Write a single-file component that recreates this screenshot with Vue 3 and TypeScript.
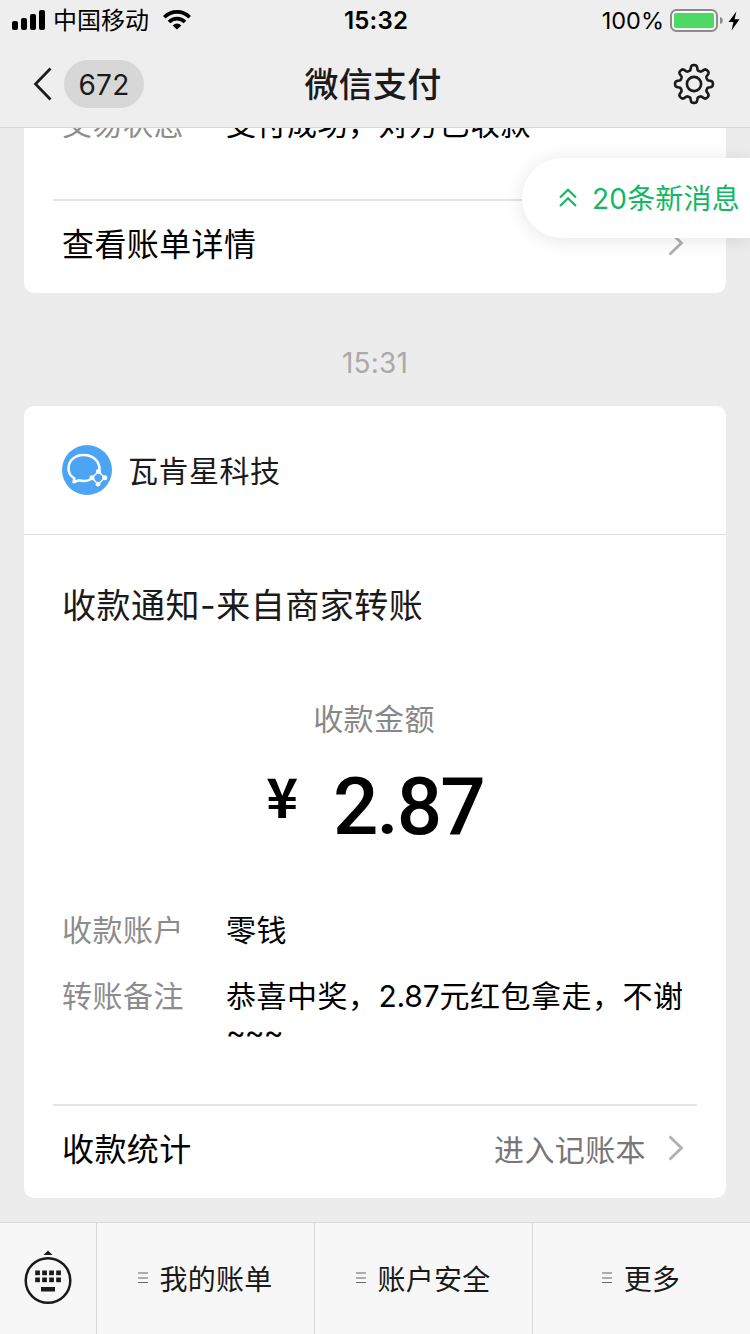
<script setup lang="ts">
interface MenuEntry {
  label: string
}

const menu: MenuEntry[] = [{ label: '我的账单' }, { label: '账户安全' }, { label: '更多' }]

interface Detail {
  label: string
  value: string
}

const details: Detail[] = [
  { label: '收款账户', value: '零钱' },
  { label: '转账备注', value: '恭喜中奖，2.87元红包拿走，不谢~~~' },
]

// Separates figures and tildes from Chinese text so they can be set tighter
const segments = (text: string): string[] => text.match(/[\d.]+|~+|[^\d.~]+/g) ?? []
const isLatin = (text: string): boolean => /^[\d.]/.test(text)
const isTilde = (text: string): boolean => text.startsWith('~')

const keys = [0, 1, 2, 3].flatMap((c) => [0, 1].map((r) => ({ x: 11.2 + c * 7, y: 20.5 + r * 7 })))

// Outline of an eight-toothed gear centred on 22,22
const gearPath = (() => {
  const steps = 192
  const points: string[] = []
  for (let i = 0; i < steps; i++) {
    const a = (i / steps) * Math.PI * 2
    const r = 16.4 + 2.5 * (Math.tanh(2.1 * Math.cos(8 * a)) / Math.tanh(2.1))
    points.push(`${(22 + r * Math.sin(a)).toFixed(2)} ${(22 - r * Math.cos(a)).toFixed(2)}`)
  }
  return `M${points.join('L')}Z`
})()
</script>

<template>
  <div class="screen">
    <header class="top">
      <div class="status">
        <div class="status-left">
          <svg class="signal" width="34" height="22" viewBox="0 0 34 22">
            <rect x="0" y="12" width="6" height="9" rx="2" />
            <rect x="9" y="9" width="6" height="12" rx="2" />
            <rect x="18" y="5" width="6" height="16" rx="2" />
            <rect x="27" y="1" width="6" height="20" rx="2" />
          </svg>
          <span class="carrier">中国移动</span>
          <svg class="wifi" width="28" height="20" viewBox="0 0 28 20">
            <g fill="none" stroke="#000" stroke-width="3.7">
              <path d="M1.3 7.3C8.4 .1 19.6 .1 26.7 7.3" />
              <path d="M6 12C10.5 7.6 17.5 7.6 22 12" />
            </g>
            <path d="M9.6 15.4Q14 11.6 18.4 15.4L14 19.6Z" />
          </svg>
        </div>
        <span class="clock">15:32</span>
        <div class="status-right">
          <span class="percent">100%</span>
          <svg width="54" height="24" viewBox="0 0 54 24">
            <rect x="1" y="1" width="46" height="21" rx="5.5" fill="#f8f8f8" stroke="#8c8c8c" stroke-width="2" />
            <rect x="4" y="4" width="40" height="15" rx="2" fill="#4cd964" />
            <path d="M50 8C53.8 8.6 53.8 14.4 50 15Z" fill="#8c8c8c" />
          </svg>
          <svg class="bolt" width="12" height="20" viewBox="0 0 12 20">
            <path d="M8.4 .5L.5 11H5.4L3.6 19.5L11.5 8.3H6.6Z" />
          </svg>
        </div>
      </div>
      <nav class="nav">
        <div class="back">
          <svg width="20" height="36" viewBox="0 0 20 36">
            <path d="M17.5 2.5L2.5 18L17.5 33.5" fill="none" stroke="#1a1a1a" stroke-width="2.7" />
          </svg>
          <span class="count">672</span>
        </div>
        <h1>微信支付</h1>
        <svg class="gear" width="44" height="44" viewBox="0 0 44 44" fill="none" stroke="#1a1a1a" stroke-width="2.6">
          <path :d="gearPath" stroke-linejoin="round" />
          <circle cx="22" cy="22" r="7.1" />
        </svg>
      </nav>
    </header>

    <main class="feed">
      <section class="card previous">
        <div class="row cut">
          <span class="label">交易状态</span>
          <span class="value">支付成功，对方已收款</span>
        </div>
        <div class="action">
          <span>查看账单详情</span>
          <svg class="chevron" width="18" height="28" viewBox="0 0 18 28">
            <path d="M2.500 2.500L14.500 14L2.500 25.500" />
          </svg>
        </div>
      </section>

      <time>15:31</time>

      <section class="card">
        <div class="merchant">
          <svg width="50" height="50" viewBox="0 0 50 50">
            <circle cx="25" cy="25" r="25" fill="#4ca4f4" />
            <path
              d="M37.5 25C37.8 16 31 10 21.5 10C12.500 10 6.500 16 6.500 23.500C6.500 28 9 31.500 12.500 33.500L11.500 37.200L17 35.300C21 36.500 25 36.200 28.500 34.500"
              fill="none" stroke="#fff" stroke-width="2.5" stroke-linejoin="round" />
            <path d="M36.500 26.500L42.800 32.800L36 39.500L30 32.800Z" fill="#4ca4f4" stroke="#fff" stroke-width="1.500" />
            <g fill="#fff">
              <circle cx="36.500" cy="26.500" r="2.500" />
              <circle cx="42.800" cy="32.800" r="2.500" />
              <circle cx="36" cy="39.200" r="2.400" />
              <circle cx="30" cy="32.800" r="2.500" />
            </g>
          </svg>
          <span>瓦肯星科技</span>
        </div>
        <h2>收款通知-来自商家转账</h2>
        <div class="amount-label">收款金额</div>
        <div class="amount"><span class="yen">¥</span><span class="sum">2.87</span></div>
        <div class="details">
          <div v-for="item in details" :key="item.label" class="row">
            <span class="label">{{ item.label }}</span>
            <span class="value"><span v-for="(part, i) in segments(item.value)" :key="i" :class="{ latin: isLatin(part), tilde: isTilde(part) }">{{ part }}</span></span>
          </div>
        </div>
        <div class="action">
          <span>收款统计</span>
          <span class="hint">进入记账本</span>
          <svg class="chevron" width="18" height="28" viewBox="0 0 18 28">
            <path d="M2.500 2.500L14.500 14L2.500 25.500" />
          </svg>
        </div>
      </section>

      <div class="unread">
        <svg width="18" height="20" viewBox="0 0 18 20" fill="none" stroke="#12b765" stroke-width="2.1">
          <path d="M1 9.500L9 1.800L17 9.500M1 18L9 10.300L17 18" />
        </svg>
        <span>20条新消息</span>
      </div>
    </main>

    <footer class="menu">
      <div class="keyboard">
        <svg width="48" height="56" viewBox="0 0 48 56">
          <path d="M19.500 5L24 .5L28.500 5Z" fill="#1a1a1a" />
          <circle cx="24" cy="30.500" r="22.300" fill="none" stroke="#1a1a1a" stroke-width="2.500" />
          <rect v-for="k in keys" :key="`${k.x}-${k.y}`" :x="k.x" :y="k.y" width="4.700" height="4.700" fill="#1a1a1a" />
          <rect x="17" y="37" width="14" height="4.500" fill="#1a1a1a" />
        </svg>
      </div>
      <div v-for="entry in menu" :key="entry.label" class="entry">
        <svg width="10" height="12" viewBox="0 0 10 12" stroke="#666" stroke-width="1.200">
          <path d="M0 1H10M0 6H10M0 10.500H10" />
        </svg>
        <span>{{ entry.label }}</span>
      </div>
    </footer>
  </div>
</template>

<style>
body {
  background: #ececec;
}
</style>

<style scoped>
.screen {
  display: flex;
  flex-direction: column;
  width: 750px;
  height: 1334px;
  overflow: hidden;
  background: #ececec;
  color: #000;
  font-family: Inter, 'Noto Sans CJK SC', sans-serif;
}
svg {
  display: block;
  flex: none;
}
.top {
  box-sizing: border-box;
  height: 128px;
  flex: none;
  background: #eee;
  border-bottom: 1px solid #d5d5d5;
}
.status {
  display: grid;
  grid-template-columns: 1fr auto 1fr;
  align-items: center;
  height: 40px;
  padding: 0 10px 0 12px;
  line-height: 38px;
}
.status-left,
.status-right {
  display: flex;
  align-items: center;
}
.status span {
  padding-top: 2px;
}
.status-right {
  justify-content: flex-end;
}
.status-right svg {
  margin-top: 1px;
}
.carrier {
  margin-left: 7px;
  font-size: 24px;
}
.wifi {
  margin-left: 14px;
}
.clock {
  font-size: 24px;
  font-weight: 600;
  letter-spacing: 0.2px;
}
.percent {
  margin-right: 6px;
  font-size: 23.5px;
}
.bolt {
  margin-left: 4px;
}
.nav {
  display: grid;
  grid-template-columns: 1fr auto 1fr;
  align-items: center;
  height: 88px;
  padding: 0 34px 0 33px;
}
.back {
  display: flex;
  align-items: center;
  gap: 11px;
}
.count {
  width: 80px;
  height: 48px;
  border-radius: 24px;
  background: #d7d7d7;
  color: #1a1a1a;
  font-size: 28px;
  line-height: 50px;
  letter-spacing: 0.3px;
  text-align: center;
}
h1 {
  margin: 0;
  padding: 2px 3px 0 0;
  color: #1a1a1a;
  font-size: 34px;
  font-weight: 500;
  letter-spacing: 0.2px;
  line-height: 48px;
}
.gear {
  justify-self: end;
}
.feed {
  position: relative;
  flex: 1;
  overflow: hidden;
  padding: 0 24px;
}
.card {
  box-sizing: border-box;
  height: 792px;
  border-radius: 10px;
  background: #fff;
}
.previous {
  display: flex;
  flex-direction: column;
  height: 165px;
  border-radius: 0 0 10px 10px;
}
.cut {
  height: 71px;
  margin-top: -22px;
  margin-bottom: 22px;
}
.row {
  display: flex;
  padding: 0 38px;
  font-size: 30px;
  line-height: 36px;
  letter-spacing: 0.5px;
}
.label {
  width: 164px;
  flex: none;
  color: #8c8c8c;
}
.value {
  width: 465px;
  flex: none;
  word-break: break-all;
}
.latin {
  letter-spacing: -0.2px;
}
.tilde {
  letter-spacing: -1px;
}
.action {
  display: flex;
  align-items: center;
  height: 88px;
  margin: 0 29px;
  padding: 0 9px;
  border-top: 2px solid #e4e4e4;
  font-size: 32px;
  letter-spacing: 0.4px;
  line-height: 44px;
}
.chevron {
  margin: 0 3px 4px auto;
}
.chevron path {
  fill: none;
  stroke: #b0b0b0;
  stroke-width: 2.8;
}
.hint {
  margin-left: auto;
  color: #777;
  font-size: 30px;
}
.hint + .chevron {
  margin-left: 21px;
}
time {
  display: block;
  height: 113px;
  color: #aaa;
  font-size: 28px;
  letter-spacing: 0.2px;
  line-height: 140px;
  text-align: center;
}
.merchant {
  display: flex;
  align-items: center;
  gap: 16px;
  height: 128px;
  padding: 0 38px;
  border-bottom: 1px solid #e0e0e0;
  color: #1a1a1a;
  font-size: 30px;
  letter-spacing: 0.5px;
}
.merchant span {
  padding-bottom: 2px;
}
h2 {
  margin: 48px 38px 0;
  color: #1a1a1a;
  font-size: 34px;
  font-weight: 400;
  letter-spacing: 0.5px;
  line-height: 46px;
}
.amount-label {
  margin-top: 68px;
  padding-right: 2px;
  color: #888;
  font-size: 30px;
  letter-spacing: 0.4px;
  line-height: 44px;
  text-align: center;
}
.amount {
  display: flex;
  justify-content: center;
  gap: 35px;
  height: 110px;
  margin-top: 8px;
}
.yen {
  font-family: 'Noto Sans CJK SC', sans-serif;
  font-size: 54px;
  font-weight: 700;
  line-height: 92px;
}
.sum {
  font-family: Roboto, sans-serif;
  font-size: 80px;
  font-weight: 500;
  letter-spacing: -2px;
  line-height: 117px;
}
.details {
  display: flex;
  flex-direction: column;
  gap: 30px;
  height: 192px;
  margin-top: 53px;
}
</style>

<style scoped>
.unread {
  position: absolute;
  top: 30px;
  right: 0;
  display: flex;
  align-items: center;
  gap: 15px;
  box-sizing: border-box;
  width: 228px;
  height: 80px;
  padding-left: 37px;
  border-radius: 40px 0 0 40px;
  background: #fff;
  box-shadow: 0 2px 20px rgba(0, 0, 0, 0.1);
  color: #12b765;
  font-size: 28px;
  letter-spacing: 0.2px;
  white-space: nowrap;
}
.unread span {
  padding-bottom: 2px;
}
.menu {
  display: grid;
  grid-template-columns: 96px 218px 218px 218px;
  box-sizing: border-box;
  height: 112px;
  flex: none;
  border-top: 1px solid #d8d8d8;
  background: #f7f7f7;
}
.keyboard {
  padding: 27px 0 0 24px;
}
.entry {
  display: flex;
  align-items: center;
  justify-content: center;
  gap: 12px;
  padding: 0 1px 2px 0;
  border-left: 1px solid #d8d8d8;
  color: #1a1a1a;
  font-size: 28px;
  letter-spacing: 0.2px;
}
</style>
